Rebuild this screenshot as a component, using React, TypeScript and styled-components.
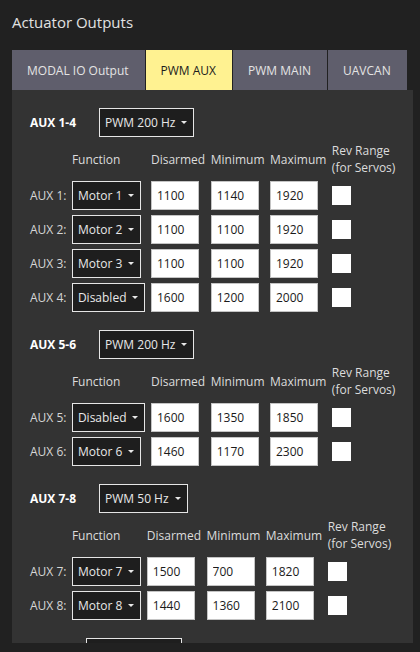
import { Fragment } from "react";
import styled, { createGlobalStyle } from "styled-components";

const GlobalStyle = createGlobalStyle`
  html, body {
    margin: 0;
    padding: 0;
    background: #212121;
  }
  body {
    font-family: "Open Sans", "Noto Sans", sans-serif;
    font-size: 12px;
    color: #dcdcdc;
  }
`;

type TRow = {
  name: string;
  fn: string;
  disarmed: number;
  min: number;
  max: number;
};

type TGroup = {
  label: string;
  rate: string;
  rows: TRow[];
};

const TABS = ["MODAL IO Output", "PWM AUX", "PWM MAIN", "UAVCAN"];
const ACTIVE_TAB = "PWM AUX";

const GROUPS: TGroup[] = [
  {
    label: "AUX 1-4",
    rate: "PWM 200 Hz",
    rows: [
      { name: "AUX 1", fn: "Motor 1", disarmed: 1100, min: 1140, max: 1920 },
      { name: "AUX 2", fn: "Motor 2", disarmed: 1100, min: 1100, max: 1920 },
      { name: "AUX 3", fn: "Motor 3", disarmed: 1100, min: 1100, max: 1920 },
      { name: "AUX 4", fn: "Disabled", disarmed: 1600, min: 1200, max: 2000 },
    ],
  },
  {
    label: "AUX 5-6",
    rate: "PWM 200 Hz",
    rows: [
      { name: "AUX 5", fn: "Disabled", disarmed: 1600, min: 1350, max: 1850 },
      { name: "AUX 6", fn: "Motor 6", disarmed: 1460, min: 1170, max: 2300 },
    ],
  },
  {
    label: "AUX 7-8",
    rate: "PWM 50 Hz",
    rows: [
      { name: "AUX 7", fn: "Motor 7", disarmed: 1500, min: 700, max: 1820 },
      { name: "AUX 8", fn: "Motor 8", disarmed: 1440, min: 1360, max: 2100 },
    ],
  },
  {
    label: "CAP 1",
    rate: "PWM 400 Hz",
    rows: [],
  },
];

const SRoot = styled.div`
  padding: 0 7px 0 12px;
`;

const STitle = styled.h1`
  margin: 0;
  padding: 12px 0 18px;
  font-size: 15px;
  line-height: 20px;
  font-weight: 400;
  color: #e2e2e2;
`;

const STabBar = styled.div`
  display: flex;
  gap: 1px;
  height: 40px;
`;

const STab = styled.div<{ $active: boolean }>`
  display: flex;
  align-items: center;
  padding: 0 16px 0 15px;
  background: ${(p) => (p.$active ? "#fff291" : "#5f5e6c")};
  color: ${(p) => (p.$active ? "#1c1c1c" : "#e4e4e4")};
  font-size: 12px;
  white-space: nowrap;
`;

const SPanel = styled.div`
  height: 553px;
  overflow: hidden;
  background: #333333;
  padding: 18px 18px 0;
  box-sizing: border-box;
  display: flex;
  flex-direction: column;
  gap: 18px;
`;

const SGroup = styled.section`
  flex-shrink: 0;
`;

const SGroupHeader = styled.div`
  display: flex;
  align-items: center;
  gap: 23px;
`;

const SGroupLabel = styled.div`
  font-weight: 700;
  color: #ffffff;
`;

const SSelect = styled.div`
  display: inline-flex;
  align-items: center;
  justify-self: start;
  gap: 6px;
  height: 29px;
  box-sizing: border-box;
  padding: 0 6px 0 5px;
  border: 1px solid #e6e6e6;
  background: #1e1e1e;
  color: #e8e8e8;
  white-space: nowrap;
`;

const SCaret = styled.span`
  width: 0;
  height: 0;
  border-left: 3px solid transparent;
  border-right: 3px solid transparent;
  border-top: 3px solid #e8e8e8;
`;

const STable = styled.div`
  display: grid;
  grid-template-columns: repeat(6, auto);
  justify-content: start;
  align-items: center;
  column-gap: 5.5px;
  row-gap: 5px;
  margin-top: 5px;
`;

const SHeadCell = styled.div`
  line-height: 17px;
  color: #dcdcdc;
  white-space: nowrap;
`;

const SRowLabel = styled.div`
  color: #d6d6d6;
  white-space: nowrap;
`;

const SNumber = styled.input`
  width: 48px;
  height: 29px;
  box-sizing: border-box;
  margin: 0;
  padding: 0 5px;
  border: 1px solid #c4c4c4;
  background: #ffffff;
  color: #1a1a1a;
  font-family: inherit;
  font-size: 12px;
  outline: none;
`;

const SCheck = styled.input`
  appearance: none;
  width: 19px;
  height: 19px;
  margin: 0;
  border: none;
  background: #ffffff;
`;

function Select({ value }: { value: string }) {
  return (
    <SSelect>
      <span>{value}</span>
      <SCaret />
    </SSelect>
  );
}

function OutputGroup({ group }: { group: TGroup }) {
  return (
    <SGroup>
      <SGroupHeader>
        <SGroupLabel>{group.label}</SGroupLabel>
        <Select value={group.rate} />
      </SGroupHeader>
      {group.rows.length > 0 && (
        <STable>
          <SHeadCell />
          <SHeadCell>Function</SHeadCell>
          <SHeadCell>Disarmed</SHeadCell>
          <SHeadCell>Minimum</SHeadCell>
          <SHeadCell>Maximum</SHeadCell>
          <SHeadCell>
            Rev Range
            <br />
            (for Servos)
          </SHeadCell>
          {group.rows.map((row) => (
            <Fragment key={row.name}>
              <SRowLabel>{row.name}:</SRowLabel>
              <Select value={row.fn} />
              <SNumber defaultValue={row.disarmed} />
              <SNumber defaultValue={row.min} />
              <SNumber defaultValue={row.max} />
              <SCheck type="checkbox" />
            </Fragment>
          ))}
        </STable>
      )}
    </SGroup>
  );
}

export default function App() {
  return (
    <SRoot>
      <GlobalStyle />
      <STitle>Actuator Outputs</STitle>
      <STabBar>
        {TABS.map((tab) => (
          <STab key={tab} $active={tab === ACTIVE_TAB}>
            {tab}
          </STab>
        ))}
      </STabBar>
      <SPanel>
        {GROUPS.map((group) => (
          <OutputGroup key={group.label} group={group} />
        ))}
      </SPanel>
    </SRoot>
  );
}
